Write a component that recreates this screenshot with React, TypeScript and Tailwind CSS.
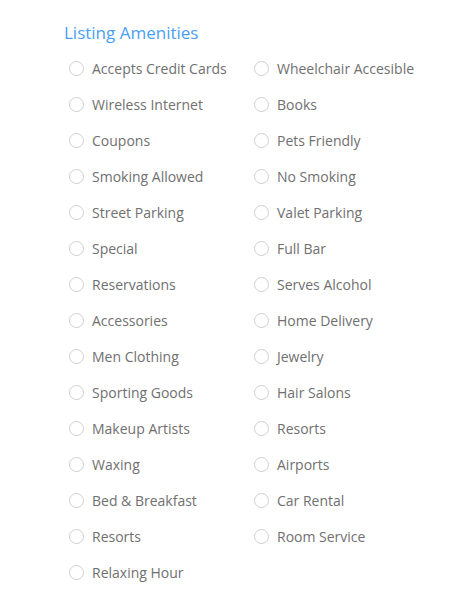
const left = [
  "Accepts Credit Cards",
  "Wireless Internet",
  "Coupons",
  "Smoking Allowed",
  "Street Parking",
  "Special",
  "Reservations",
  "Accessories",
  "Men Clothing",
  "Sporting Goods",
  "Makeup Artists",
  "Waxing",
  "Bed & Breakfast",
  "Resorts",
  "Relaxing Hour",
];

const right = [
  "Wheelchair Accesible",
  "Books",
  "Pets Friendly",
  "No Smoking",
  "Valet Parking",
  "Full Bar",
  "Serves Alcohol",
  "Home Delivery",
  "Jewelry",
  "Hair Salons",
  "Resorts",
  "Airports",
  "Car Rental",
  "Room Service",
];

function Item({ label }: { label: string }) {
  return (
    <label className="flex h-[36px] items-center">
      <span className="ml-[5px] h-[15px] w-[15px] shrink-0 rounded-full border border-[#cfcfcf] bg-white" />
      <span className="ml-[8px] text-[14px] text-[#707070]">{label}</span>
    </label>
  );
}

export default function App() {
  const rows = left.map((l, i) => [l, right[i]] as const);
  return (
    <div className="min-h-[613px] bg-white pl-[64px] pt-[22px] font-['Open_Sans',sans-serif]">
      <h3 className="text-[17px] font-medium leading-[22px] text-[#4a9ff5]">Listing Amenities</h3>
      <div className="mt-[6px] grid grid-cols-[185px_185px]">
        {rows.map(([a, b], i) => (
          <div key={i} className="contents">
            <Item label={a} />
            {b ? <Item label={b} /> : <div />}
          </div>
        ))}
      </div>
    </div>
  );
}
